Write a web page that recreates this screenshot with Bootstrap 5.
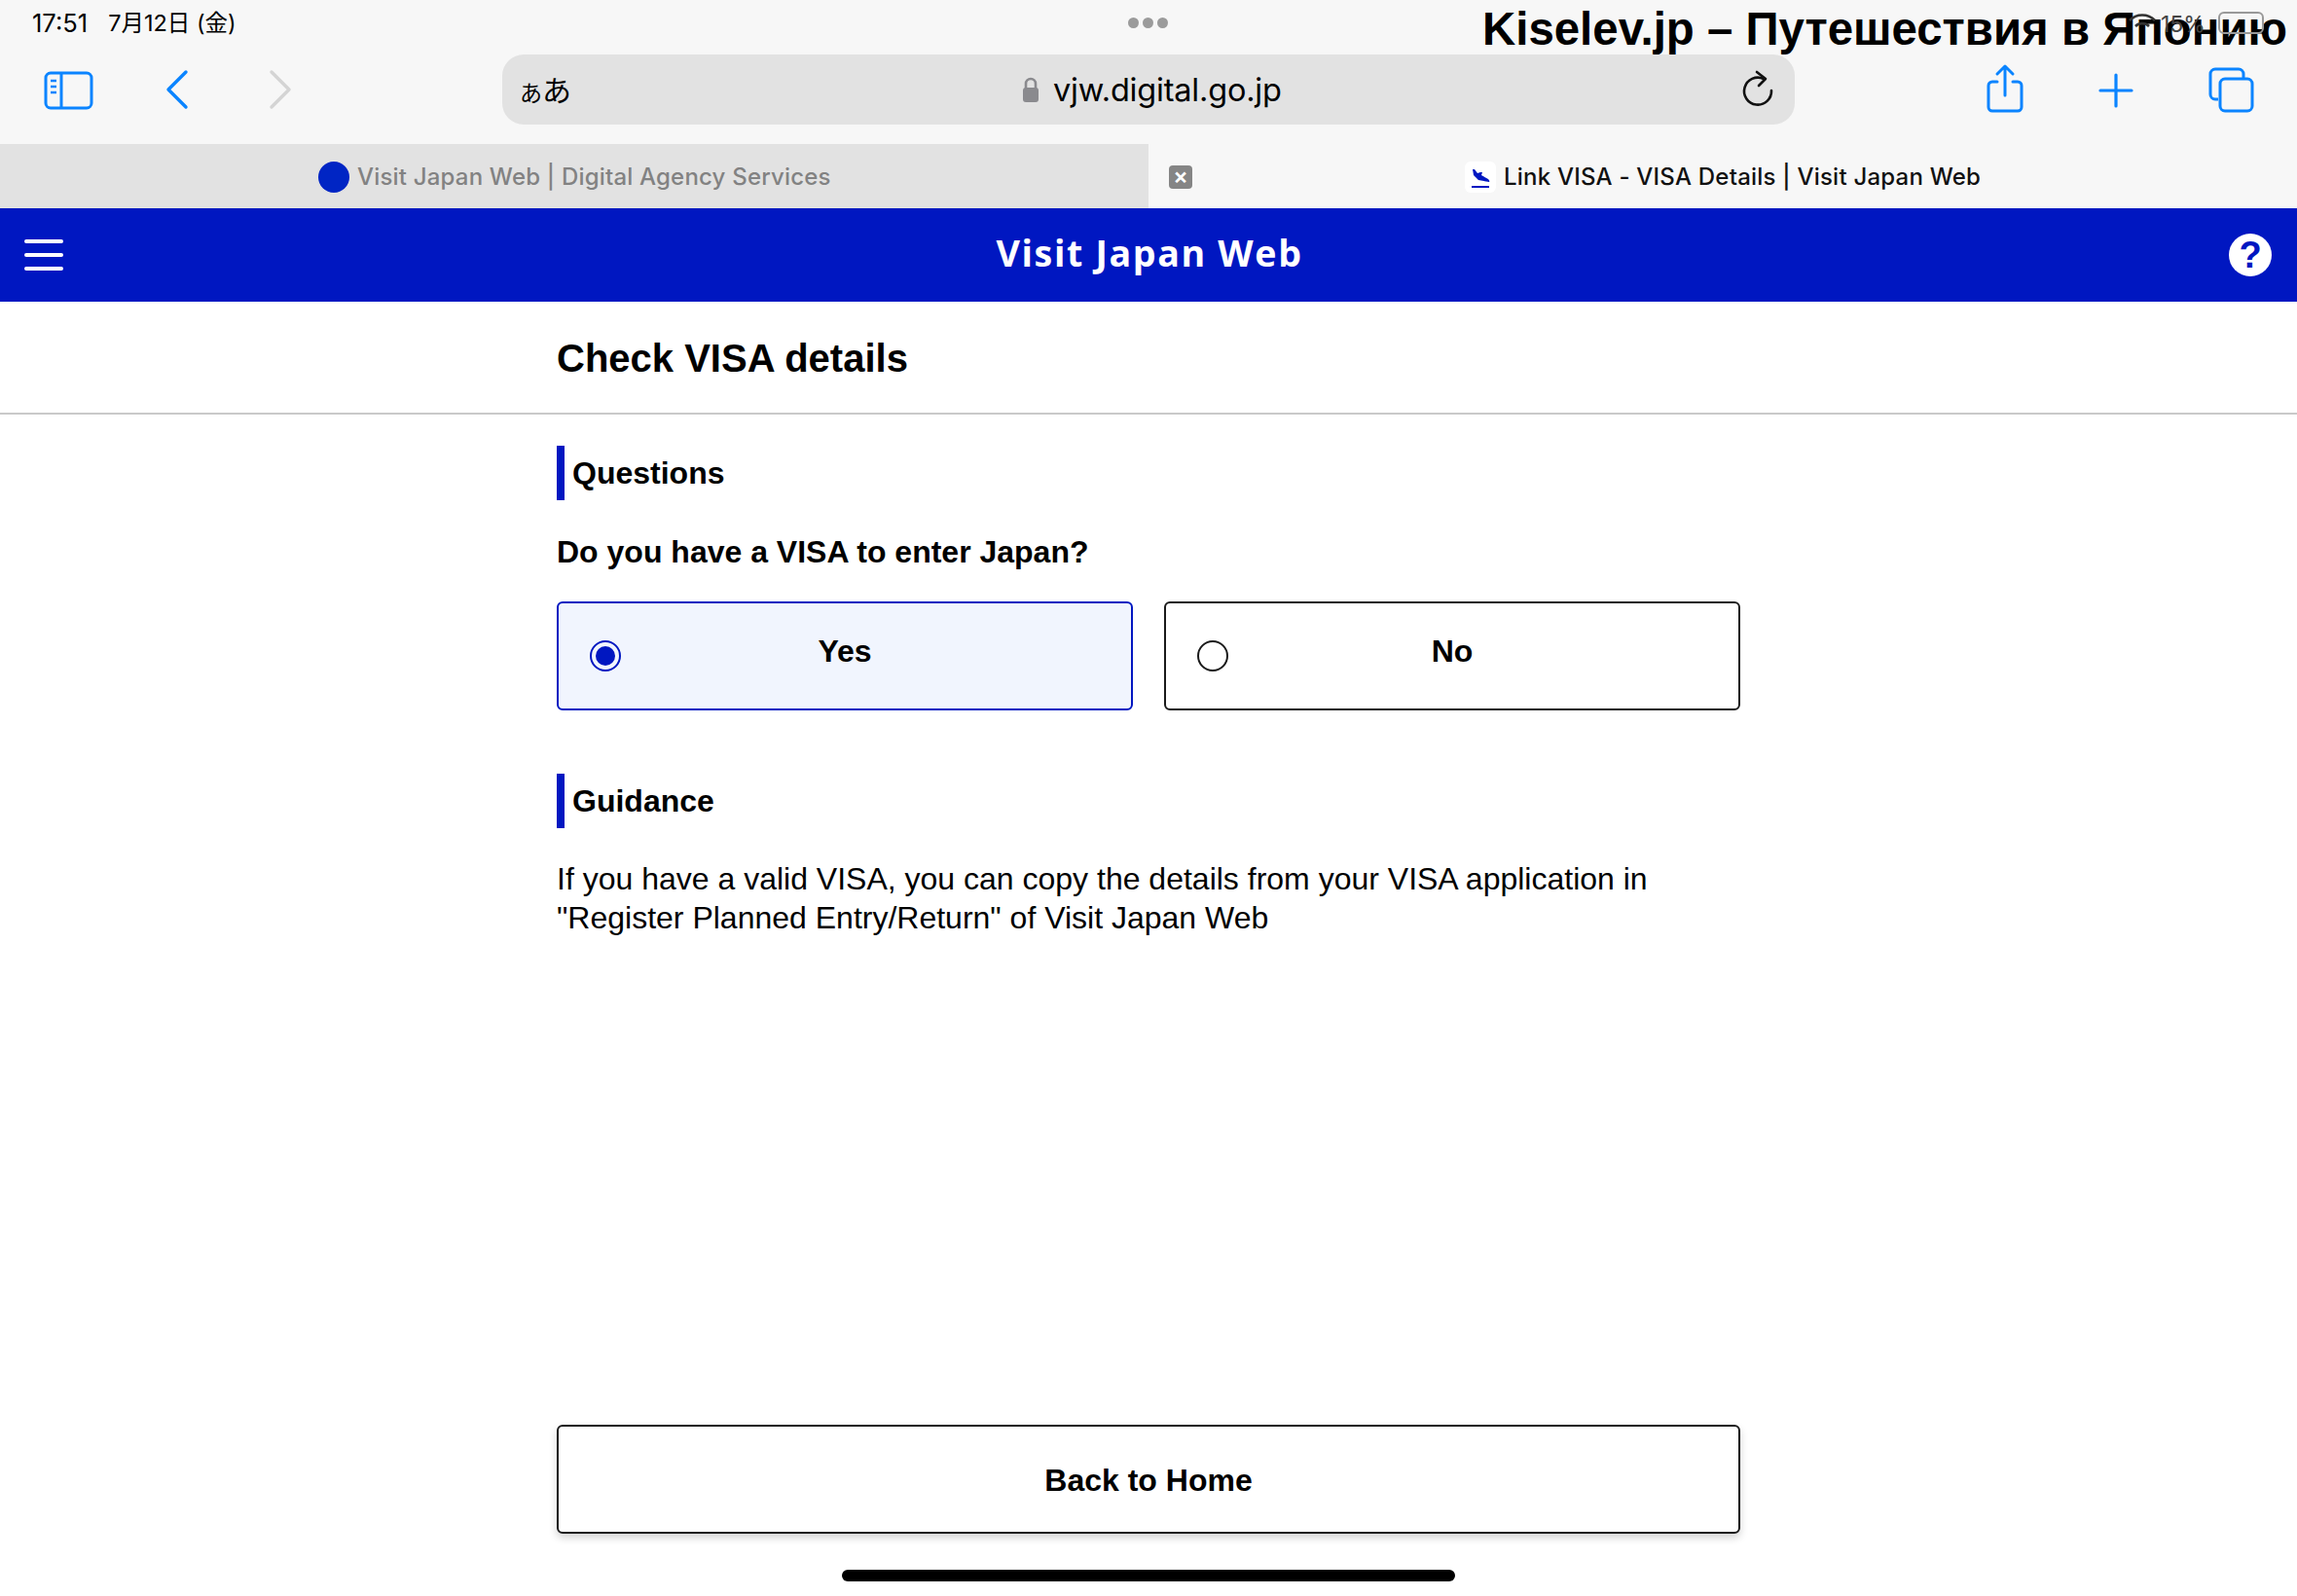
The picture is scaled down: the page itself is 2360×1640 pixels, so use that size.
<!doctype html>
<html lang="en"><head><meta charset="utf-8"><title>Link VISA</title>
<link href="https://cdn.jsdelivr.net/npm/bootstrap@5.3.0/dist/css/bootstrap.min.css" rel="stylesheet">
<style>
html,body{height:100%;margin:0}
body{width:2360px;height:1640px;overflow:hidden;font-family:"Liberation Sans",Arial,sans-serif;color:#000;background:#fff;position:relative}
.chrome{background:#f7f7f7;font-family:Inter,"Noto Sans CJK JP",sans-serif}
.statusrow{height:48px;padding:0 0 0 33px;font-size:25.5px;position:relative}
.statusrow .dateword{margin-left:21px;font-size:23.5px}
.dots{left:1159px;top:18px}
.dots i{display:block;width:11px;height:11px;border-radius:50%;background:#9b9b9b}
.tool{height:100px;position:relative}
.ico{flex:none;overflow:visible}
.urlbar{position:absolute;left:516px;top:8px;width:1328px;height:72px;background:#e2e2e2;border-radius:22px;padding:0 22px 0 18px}
.aa{font-size:30px;font-family:"Noto Sans CJK JP",sans-serif;line-height:1;margin-top:-2px}
.aa small{font-size:23px}
.urltext{font-size:32.5px;letter-spacing:-.2px;padding-top:2px}
.urlmid{position:absolute;left:534px;top:0;height:72px;gap:14px}
.tbtn{position:absolute;top:0}
.tabs{height:66px;font-size:24px;letter-spacing:.22px;font-weight:500}
.tab1{width:1180px;background:#e2e2e2;color:#828282;padding-left:327px;gap:8px}
.tab1 .tabtxt1{letter-spacing:.19px;padding-top:2px}
.tab2{flex:1;padding-left:21px;position:relative}
.fav1{width:32px;height:32px;border-radius:50%;background:#0025c4;margin-top:2px}
.closex{width:24px;height:24px;border-radius:4px;background:#858585;color:#fff;font-size:23px;line-height:22px;text-align:center;font-weight:600;margin-top:2px}
.fav2{position:absolute;left:325px;top:18px;width:32px;height:32px;background:#fff;border-radius:6px}
.tabtxt2{position:absolute;left:365px;top:1px;line-height:66px;color:#111;white-space:nowrap}
.topnav{height:96px;background:#0017c1;color:#fff;padding:0 26px 0 25px}
.burger i{display:block;width:40px;height:4px;background:#fff;border-radius:2px;margin-bottom:10px}
.burger i:last-child{margin-bottom:0}
.brandname{font-family:"Open Sans",sans-serif;font-weight:700;font-size:37.6px;letter-spacing:1.65px;line-height:1;position:absolute;left:0;right:0;text-align:center;margin-top:-5px;padding-left:2px}
.helpdot{width:44px;height:44px;border-radius:50%;background:#fff;color:#0017c1;font-weight:700;font-size:38px;line-height:44px;text-align:center;font-family:"Liberation Sans",sans-serif}
.pagehead{height:116px;border-bottom:2px solid #c9c9c9}
.wrap{width:1216px;margin-left:572px}
.pagetitle{font-size:40px;font-weight:700;line-height:1;padding-top:38px;margin:0}
.sect{border-left:8px solid #0017c1;height:56px;padding-left:8px;font-size:32px;font-weight:700;line-height:56px;margin:0}
.quest{font-size:32px;font-weight:700;line-height:40px;margin:0}
.optrow{gap:32px}
.opt{width:592px;height:112px;border:2px solid #1a1a1a;border-radius:6px;position:relative;font-size:32px;font-weight:700;text-align:center;padding-top:29px;line-height:40px}
.opt.on{border-color:#0017c1;background:#f1f5fe}
.rad{position:absolute;left:32px;top:38px;width:32px;height:32px;border-radius:50%;border:2px solid #1a1a1a}
.on .rad{border-color:#0017c1}
.on .rad::after{content:"";position:absolute;left:4px;top:4px;width:20px;height:20px;border-radius:50%;background:#0017c1}
.guide{font-size:32px;line-height:40px;margin:0}
.backbtn{display:block;width:1216px;height:112px;border:2px solid #1a1a1a;border-radius:6px;background:#fff;font-size:32px;font-weight:700;line-height:110px;text-align:center;box-shadow:0 4px 8px rgba(0,0,0,.18);color:#000;padding:0}
.footwrap{position:absolute;left:572px;top:1464px}
.homebar{position:absolute;left:865px;top:1613px;width:630px;height:12px;border-radius:6px;background:#000}
.mark-over{position:absolute;left:1523px;top:-1px;font-size:47.4px;font-weight:700;line-height:62px;white-space:nowrap;color:#000}
.sys{position:absolute;left:2220px;top:8px;height:32px;color:#444;font-size:23px;font-family:Inter,sans-serif}
.batt{position:absolute;left:2279px;top:12px;width:47px;height:23px;border:2px solid #999;border-radius:6px}
</style></head>
<body>
<div class="chrome">
  <div class="statusrow d-flex align-items-center"><span>17:51</span><span class="dateword">7月12日 (金)</span>
    <div class="dots position-absolute d-flex gap-1"><i></i><i></i><i></i></div>
  </div>
  <div class="tool">
    <svg class="tbtn ico" style="left:45px;top:24px" width="52" height="42" viewBox="0 0 52 42" fill="none" stroke="#0a84ff" stroke-width="3"><rect x="2" y="3" width="47" height="36" rx="5"/><path d="M18 3v36"/><path d="M7 11h6M7 17h6M7 23h6" stroke-width="2.4"/></svg>
    <svg class="tbtn ico" style="left:169px;top:23px" width="26" height="42" viewBox="0 0 26 42" fill="none" stroke="#0a84ff" stroke-width="3.4" stroke-linecap="round" stroke-linejoin="round"><path d="M22 3L4 21l18 18"/></svg>
    <svg class="tbtn ico" style="left:275px;top:23px" width="26" height="42" viewBox="0 0 26 42" fill="none" stroke="#d4d4d4" stroke-width="3.4" stroke-linecap="round" stroke-linejoin="round"><path d="M4 3l18 18L4 39"/></svg>
    <div class="urlbar d-flex align-items-center justify-content-between">
      <span class="aa"><small>あ</small>あ</span>
      <div class="urlmid d-flex align-items-center">
        <svg class="ico" width="18" height="28" viewBox="0 0 18 28"><path d="M4 13V8a5 5 0 0 1 10 0v5" fill="none" stroke="#8a8a8e" stroke-width="2.6"/><rect x="1" y="12" width="16" height="15" rx="3" fill="#8a8a8e"/></svg>
        <span class="urltext">vjw.digital.go.jp</span>
      </div>
      <svg class="ico" width="32" height="40" viewBox="0 0 32 40" fill="none" stroke="#111" stroke-width="2.6" stroke-linecap="round" stroke-linejoin="round"><path d="M22 9A14 14 0 1 0 30 21"/><path d="M15 2l9 7-7 7"/></svg>
    </div>
    <svg class="tbtn ico" style="left:2040px;top:18px" width="40" height="50" viewBox="0 0 40 50" fill="none" stroke="#0a84ff" stroke-width="3" stroke-linecap="round" stroke-linejoin="round"><path d="M12 18H7a4 4 0 0 0-4 4v22a4 4 0 0 0 4 4h26a4 4 0 0 0 4-4V22a4 4 0 0 0-4-4h-5"/><path d="M20 32V3M12 10l8-8 8 8"/></svg>
    <svg class="tbtn ico" style="left:2156px;top:27px" width="36" height="36" viewBox="0 0 36 36" fill="none" stroke="#0a84ff" stroke-width="3.2" stroke-linecap="round"><path d="M18 2v32M2 18h32"/></svg>
    <svg class="tbtn ico" style="left:2269px;top:22px" width="48" height="46" viewBox="0 0 48 46" fill="none" stroke="#0a84ff" stroke-width="3"><path d="M10 32H7a5 5 0 0 1-5-5V6a5 5 0 0 1 5-5h24a5 5 0 0 1 5 5v5"/><rect x="12" y="11" width="33" height="33" rx="5"/></svg>
  </div>
  <div class="tabs d-flex">
    <div class="tab1 d-flex align-items-center"><span class="fav1"></span><span class="tabtxt1">Visit Japan Web | Digital Agency Services</span></div>
    <div class="tab2 d-flex align-items-center"><span class="closex">×</span>
      <span class="fav2"><svg width="32" height="32" viewBox="0 0 32 32"><path d="M8 5h2l3 4 3-1h2l-1 3 7 4q2 2 1 3L14 16l-5-5z" fill="#0017c1"/><path d="M7 23h18" stroke="#0017c1" stroke-width="2"/></svg></span>
      <span class="tabtxt2">Link VISA - VISA Details | Visit Japan Web</span></div>
  </div>
</div>
<header class="topnav d-flex align-items-center justify-content-between position-relative">
  <div class="burger"><i></i><i></i><i></i></div>
  <div class="brandname">Visit Japan Web</div>
  <div class="helpdot">?</div>
</header>
<div class="pagehead"><div class="wrap"><h1 class="pagetitle">Check VISA details</h1></div></div>
<main class="wrap">
  <h2 class="sect" style="margin-top:32px">Questions</h2>
  <p class="quest" style="margin-top:33px">Do you have a VISA to enter Japan?</p>
  <div class="optrow d-flex" style="margin-top:31px">
    <div class="opt on"><span class="rad"></span>Yes</div>
    <div class="opt"><span class="rad"></span>No</div>
  </div>
  <h2 class="sect" style="margin-top:65px">Guidance</h2>
  <p class="guide" style="margin-top:32px">If you have a valid VISA, you can copy the details from your VISA application in<br>"Register Planned Entry/Return" of Visit Japan Web</p>
</main>
<div class="footwrap"><button class="backbtn" type="button">Back to Home</button></div>
<div class="homebar"></div>
<div class="mark-over">Kiselev.jp – Путешествия в Японию</div>
<svg class="position-absolute" style="left:2186px;top:12px" width="30" height="24" viewBox="0 0 30 24" fill="none" stroke="#333" stroke-width="2.6"><path d="M2 9a18 18 0 0 1 26 0M8 15a10 10 0 0 1 14 0"/></svg>
<div class="sys">15%</div>
<div class="batt"></div>
<script src="https://cdn.jsdelivr.net/npm/bootstrap@5.3.0/dist/js/bootstrap.bundle.min.js"></script>
</body></html>
